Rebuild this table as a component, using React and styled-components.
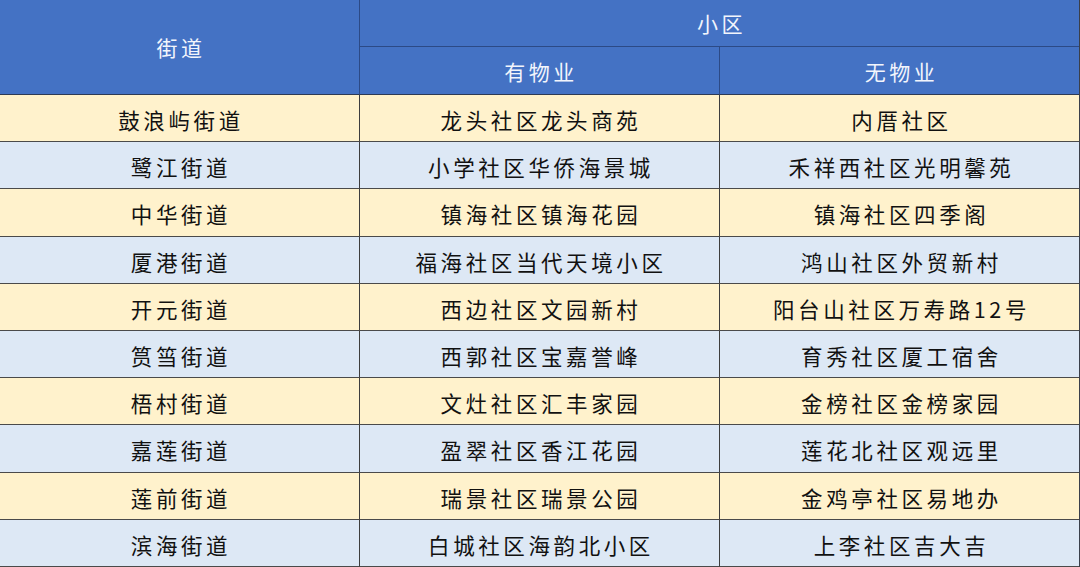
import React from "react";
import styled, { createGlobalStyle } from "styled-components";

const Global = createGlobalStyle`
  html, body { margin: 0; padding: 0; background: #fff; }
  body { font-family: "Noto Sans CJK SC", "Noto Sans", sans-serif; }
`;

const rows = [
  ["鼓浪屿街道", "龙头社区龙头商苑", "内厝社区"],
  ["鹭江街道", "小学社区华侨海景城", "禾祥西社区光明馨苑"],
  ["中华街道", "镇海社区镇海花园", "镇海社区四季阁"],
  ["厦港街道", "福海社区当代天境小区", "鸿山社区外贸新村"],
  ["开元街道", "西边社区文园新村", "阳台山社区万寿路12号"],
  ["筼筜街道", "西郭社区宝嘉誉峰", "育秀社区厦工宿舍"],
  ["梧村街道", "文灶社区汇丰家园", "金榜社区金榜家园"],
  ["嘉莲街道", "盈翠社区香江花园", "莲花北社区观远里"],
  ["莲前街道", "瑞景社区瑞景公园", "金鸡亭社区易地办"],
  ["滨海街道", "白城社区海韵北小区", "上李社区吉大吉"],
];

const Table = styled.div`
  width: 1080px;
  height: 567px;
  display: grid;
  grid-template-columns: 360px 360px 360px;
  grid-template-rows: 47px 48px repeat(10, 47.2px);
  box-sizing: border-box;
  border-right: 1px solid #3a3f4a;
  overflow: hidden;
`;

const HeadCell = styled.div`
  grid-column: ${(p) => p.$col};
  grid-row: ${(p) => p.$row};
  background: #4472c4;
  color: #f2f5fc;
  font-size: 21px;
  letter-spacing: 3.5px;
  display: flex;
  align-items: center;
  justify-content: center;
  box-sizing: border-box;
  border-right: ${(p) => (p.$noRight ? "none" : "1px solid #2c4a86")};
  border-bottom: 1px solid ${(p) => (p.$bottomDark ? "#2d3a55" : "#2c4a86")};
  padding-left: 3px;
`;

const Cell = styled.div`
  background: ${(p) => (p.$alt ? "#dde8f5" : "#fff2cc")};
  color: #111;
  font-size: 21.5px;
  letter-spacing: 3.6px;
  display: flex;
  align-items: center;
  justify-content: center;
  box-sizing: border-box;
  border-right: ${(p) => (p.$last ? "none" : "1px solid #3d3d3d")};
  border-bottom: 1px solid #4a4a4a;
  padding-top: 3px;
  padding-left: 3px;
  white-space: nowrap;
`;

export default function App() {
  return (
    <>
      <Global />
      <Table>
        <HeadCell $col="1" $row="1 / span 2" $bottomDark>
          街道
        </HeadCell>
        <HeadCell $col="2 / span 2" $row="1" $noRight>
          小区
        </HeadCell>
        <HeadCell $col="2" $row="2" $bottomDark>
          有物业
        </HeadCell>
        <HeadCell $col="3" $row="2" $bottomDark $noRight>
          无物业
        </HeadCell>
        {rows.map((r, i) =>
          r.map((t, j) => (
            <Cell key={`${i}-${j}`} $alt={i % 2 === 1} $last={j === 2}>
              {t}
            </Cell>
          ))
        )}
      </Table>
    </>
  );
}
